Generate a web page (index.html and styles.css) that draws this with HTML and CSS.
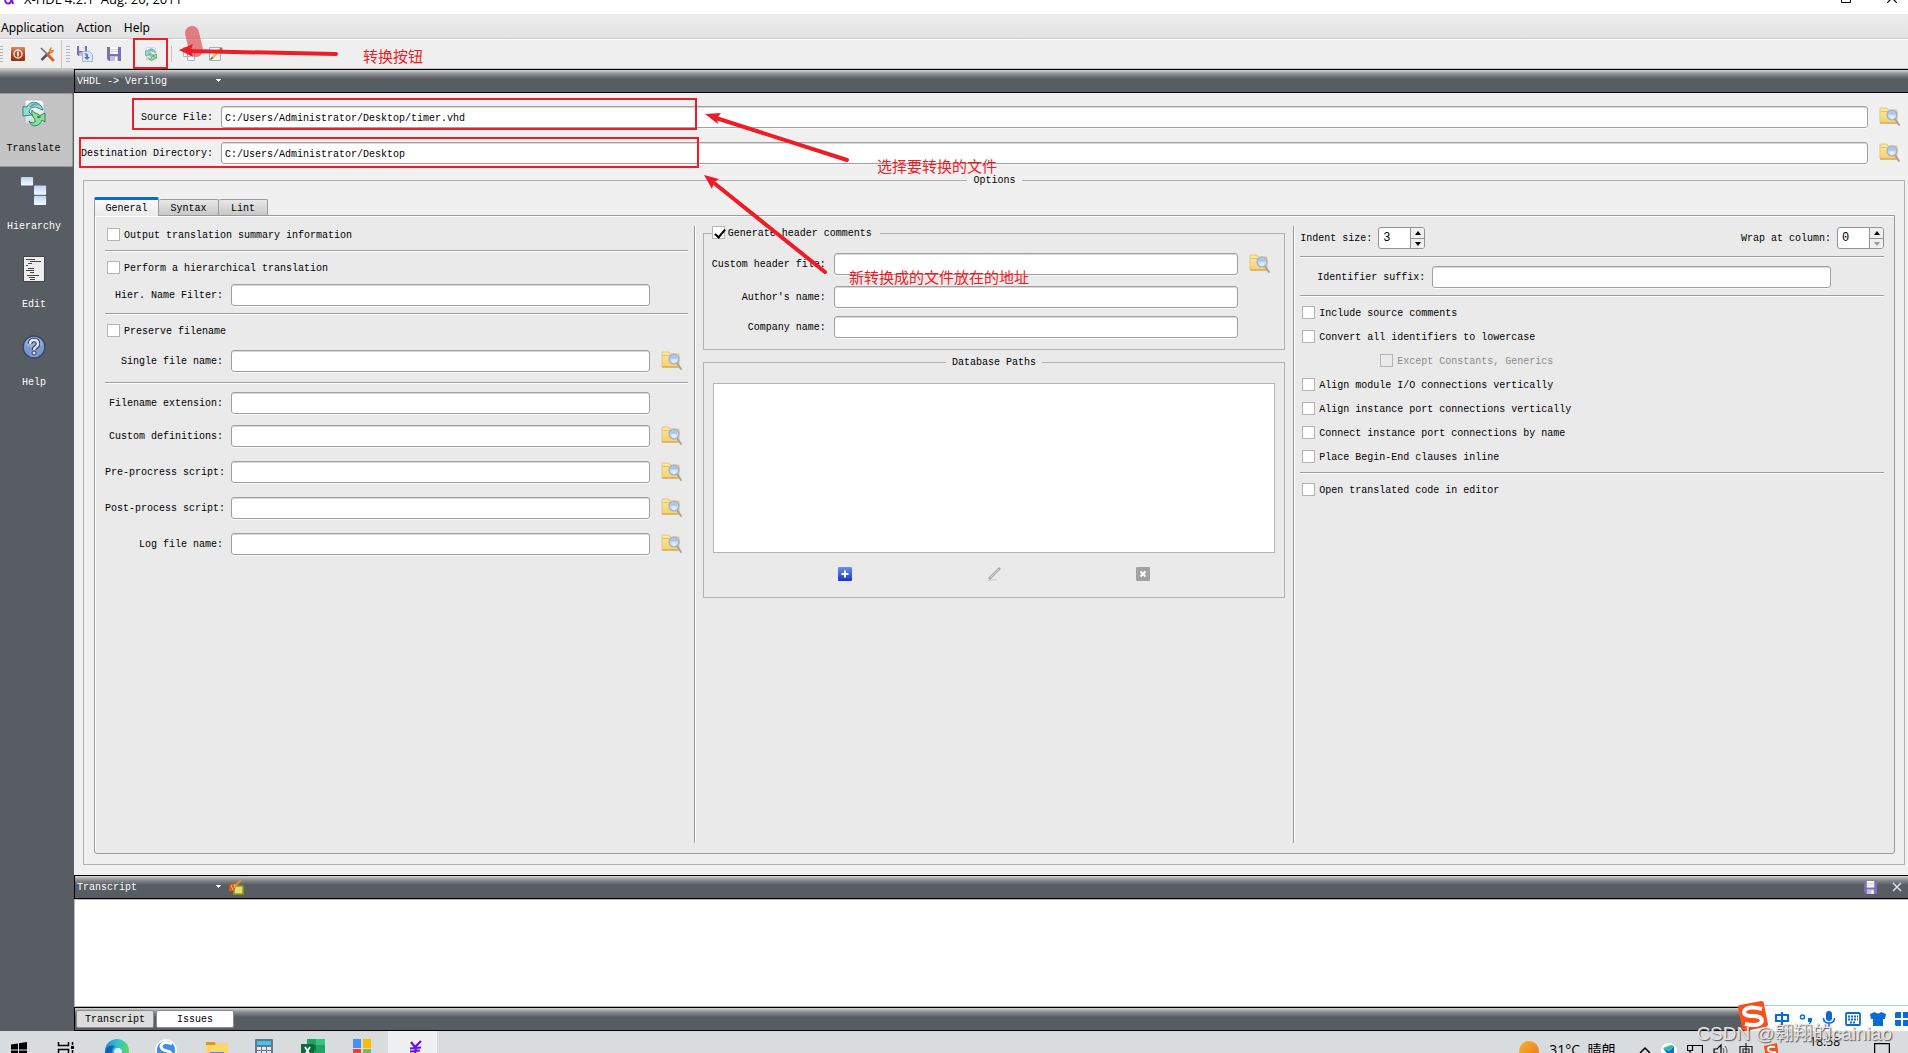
FILE: index.html
```html
<!DOCTYPE html>
<html lang="en">
<head>
<meta charset="utf-8">
<title>X-HDL 4.2.1</title>
<link rel="stylesheet" href="styles.css">
</head>
<body>
<svg class="defs" aria-hidden="true">
  <defs>
    <linearGradient id="gFolder" x1="0" y1="0" x2="0" y2="1"><stop offset="0" stop-color="#fbe9a6"/><stop offset="1" stop-color="#f3d26e"/></linearGradient>
    <radialGradient id="gLens" cx=".5" cy=".7" r=".6"><stop offset="0" stop-color="#eaf4ff"/><stop offset="1" stop-color="#a9c5f0"/></radialGradient>
    <linearGradient id="gPage" x1="0" y1="0" x2="0" y2="1"><stop offset="0" stop-color="#ffffff"/><stop offset="1" stop-color="#cfd9e6"/></linearGradient>
    <linearGradient id="gBox" x1="0" y1="0" x2="0" y2="1"><stop offset="0" stop-color="#b9d4f3"/><stop offset="1" stop-color="#f6faff"/></linearGradient>
    <linearGradient id="gPower" x1="0" y1="0" x2="0" y2="1"><stop offset="0" stop-color="#d98a68"/><stop offset=".5" stop-color="#b34a1c"/><stop offset="1" stop-color="#94300c"/></linearGradient>
    <linearGradient id="gPlus" x1="0" y1="0" x2="0" y2="1"><stop offset="0" stop-color="#6c94ea"/><stop offset="1" stop-color="#1834c8"/></linearGradient>
    <linearGradient id="gSun" x1="0" y1="0" x2="1" y2="1"><stop offset="0" stop-color="#f5b52c"/><stop offset="1" stop-color="#f0701c"/></linearGradient>
    <linearGradient id="gEdge" x1="0" y1="0" x2="1" y2="0"><stop offset="0" stop-color="#1b8fd8"/><stop offset=".5" stop-color="#2bbfd6"/><stop offset="1" stop-color="#5fd95a"/></linearGradient>
  </defs>
  <symbol id="browse" viewBox="0 0 22 20">
    <path d="M1 2q0-1 1-1h6l1 2h9v13H1z" fill="url(#gFolder)" stroke="#e4c67c"/>
    <path d="M1 16h17" stroke="#dfa04a" stroke-width="1.200"/>
    <path d="M2 4.500h7" stroke="#e2c070"/>
    <path d="M16 12l4 6" stroke="#a4a4a4" stroke-width="2" stroke-linecap="round"/>
    <circle cx="13" cy="8" r="5" fill="url(#gLens)" stroke="#a3adbd" stroke-width="1.200"/>
    <path d="M9.500 7a4 3.500 0 0 1 7 0q-3.500 1.500-7 0z" fill="#8fb2ec" opacity=".6"/>
  </symbol>
  <symbol id="translate" viewBox="0 0 24 28">
    <path d="M3 1h16l3 3v21H3z" fill="url(#gPage)" stroke="#b4bcc8"/>
    <path d="M21 11C19 3 9 0 5 8L1 7.500V17l9-1-3-3c1-5 6-6 9-4z" fill="#8fe0c8" stroke="#3f7d92"/>
    <path d="M8 8q5-5 10-2" fill="none" stroke="#5b9fc4" stroke-width="1.500"/>
    <path d="M10 11c3 5 9 3 8 8l-3-1 8-4v9l-3-2C18 28 9 29 7 22c3 3 7 2 6-1-1-3-4-4-3-10z" fill="#8ede98" stroke="#2f8750"/>
  </symbol>
  <symbol id="floppy" viewBox="0 0 14 14">
    <path d="M0 0h14v14H2l-2-2z" fill="#7c6fb4"/>
    <path d="M3 0h8v7H3z" fill="#fff"/><path d="M3 2.500h8M3 4.500h8" stroke="#d0d0dc"/>
    <path d="M3 9h8v5H3z" fill="#c3bedc"/><path d="M8 10h2v4H8z" fill="#fff"/>
  </symbol>
</svg>

<header class="titlebar">
  <svg class="app-logo" width="12" height="16" viewBox="0 0 12 16"><path d="M1 10q1 5 5 3l5-10M1 5q6 0 8 9" fill="none" stroke="#7a1ce0" stroke-width="2"/></svg>
  <span class="window-title">X-HDL 4.2.1&nbsp; Aug. 20, 2011</span>
  <span class="window-controls">
    <svg width="10" height="10" viewBox="0 0 10 10"><path d="M.5.5h9v9h-9z" fill="none" stroke="#000"/></svg>
    <svg width="10" height="10" viewBox="0 0 10 10"><path d="M0 0l10 10M10 0L0 10" stroke="#000" stroke-width="1.200"/></svg>
  </span>
</header>

<nav class="menubar">
  <button>Application</button><button>Action</button><button>Help</button>
</nav>

<div class="toolbar">
  <i class="grip"></i>
  <button aria-label="Exit"><svg width="16" height="16" viewBox="0 0 16 16"><rect x="1" y="1" width="14" height="14" rx="1" fill="url(#gPower)"/><circle cx="8" cy="8" r="4" fill="none" stroke="#f3dccf" stroke-width="1.500"/><path d="M8 5.500v5" stroke="#fff" stroke-width="1.500"/></svg></button>
  <button aria-label="Preferences"><svg width="16" height="16" viewBox="0 0 16 16"><path d="M2 2l8 8" stroke="#666" stroke-width="1.500"/><path d="M10 10l4 4" stroke="#d5651c" stroke-width="3" stroke-linecap="round"/><path d="M7 10L12 5" stroke="#d0662a" stroke-width="2.500"/><path d="M10 5.500q0-4 3-4.500l-1 3 3 0q0 3-4 3.500" fill="#e28a3a"/><path d="M2.500 14l5-5" stroke="#555" stroke-width="2.500"/></svg></button>
  <i class="divider full"></i>
  <i class="grip"></i>
  <button aria-label="Save as"><svg width="16" height="16" viewBox="0 0 16 16"><use href="#floppy" x="0" y="0" width="10" height="10"/><path d="M5.500 5.500h7l3 3v7h-10z" fill="#dfe8f6" stroke="#a9b4ca"/><path d="M7 7q5 0 4 4h2l-3 3-3-3h2q0-3-2-4z" fill="#4c78c4"/></svg></button>
  <button aria-label="Save"><svg width="14" height="14"><use href="#floppy"/></svg></button>
  <button class="run" aria-label="Translate"><svg width="12" height="14"><use href="#translate"/></svg></button>
  <i class="divider"></i>
  <button class="copy" aria-label="Copy"><svg width="14" height="16" viewBox="0 0 14 16"><path d="M1.500 1.500h7v9h-7zM5.500 5.500h7v9h-7z" fill="#f3f6fb" stroke="#a9b5cc"/></svg></button>
  <button class="compose" aria-label="Edit"><svg width="16" height="16" viewBox="0 0 16 16"><path d="M1.500 1.500h11v13h-11z" fill="#f2f5fa" stroke="#a4adbd"/><path d="M4 12L12 4" stroke="#e5c04c" stroke-width="2.500"/><path d="M12 4l2-2" stroke="#c4604c" stroke-width="2.500"/><path d="M2.500 13.500l2-2" stroke="#555" stroke-width="1.500"/></svg></button>
</div>

<div class="workspace">
  <nav class="sidebar">
    <button class="side-item selected"><svg width="24" height="28"><use href="#translate"/></svg>Translate</button>
    <button class="side-item"><svg width="28" height="30" viewBox="0 0 28 30"><path d="M7 9v17h8M7 14h8" fill="none" stroke="#55597f" stroke-width="1.500"/><rect x="0" y="0" width="13" height="9" rx="1" fill="url(#gBox)"/><rect x="14" y="9" width="13" height="10" rx="1" fill="url(#gBox)"/><rect x="14" y="20" width="13" height="10" rx="1" fill="url(#gBox)"/></svg>Hierarchy</button>
    <button class="side-item"><svg width="22" height="28" viewBox="0 0 22 28"><path d="M.5 1.500h21v25H.5z" fill="#eee" stroke="#444"/><path d="M3 4.500h9M7 6.500h11M5 8.500h4M3 10.500h2M5 13.500h6M3 15.500h8M7 17.500h4M4 20.500h12M6 22.500h6M7 24.500h5" stroke="#444"/></svg>Edit</button>
    <button class="side-item"><svg width="24" height="28" viewBox="0 0 24 28"><circle cx="12" cy="14" r="11" fill="#7f98cc" stroke="#34496f" stroke-width="1.500"/><path d="M3 12a9 8 0 0 1 18 0q-9 5-18 0z" fill="#a9bde3" opacity=".6"/><path d="M8 11q0-4 4-4t4 4q0 2-2 3t-2 3" fill="none" stroke="#2c3f66" stroke-width="4.500"/><path d="M8 11q0-4 4-4t4 4q0 2-2 3t-2 3" fill="none" stroke="#e6e6e6" stroke-width="2.500"/><circle cx="12" cy="20" r="2" fill="#e6e6e6" stroke="#2c3f66"/></svg>Help</button>
  </nav>

  <div class="content">
    <div class="dockbar">
      <select aria-label="Translation direction"><option>VHDL -&gt; Verilog</option></select>
    </div>

    <main class="main">
      <div class="path-row">
        <label for="src">Source File:</label>
        <input id="src" type="text" value="C:/Users/Administrator/Desktop/timer.vhd">
        <button class="browse" aria-label="Browse"><svg width="22" height="20"><use href="#browse"/></svg></button>
      </div>
      <div class="path-row">
        <label for="dst">Destination Directory:</label>
        <input id="dst" type="text" value="C:/Users/Administrator/Desktop">
        <button class="browse" aria-label="Browse"><svg width="22" height="20"><use href="#browse"/></svg></button>
      </div>

      <fieldset class="group options">
        <legend>Options</legend>
        <div class="tabs" role="tablist">
          <button class="tab active" role="tab">General</button><button class="tab" role="tab">Syntax</button><button class="tab" role="tab">Lint</button>
        </div>
        <div class="pane">
          <section class="col left">
            <label class="check"><input type="checkbox">Output translation summary information</label>
            <hr>
            <label class="check"><input type="checkbox">Perform a hierarchical translation</label>
            <div class="field short"><label for="f1">Hier. Name Filter:</label><input id="f1" type="text"></div>
            <hr>
            <label class="check"><input type="checkbox">Preserve filename</label>
            <div class="field"><label for="f2">Single file name:</label><input id="f2" type="text"><button class="browse" aria-label="Browse"><svg width="22" height="20"><use href="#browse"/></svg></button></div>
            <hr>
            <div class="field short"><label for="f3">Filename extension:</label><input id="f3" type="text"></div>
            <div class="field"><label for="f4">Custom definitions:</label><input id="f4" type="text"><button class="browse" aria-label="Browse"><svg width="22" height="20"><use href="#browse"/></svg></button></div>
            <div class="field"><label for="f5">Pre-procress script:</label><input id="f5" type="text"><button class="browse" aria-label="Browse"><svg width="22" height="20"><use href="#browse"/></svg></button></div>
            <div class="field"><label for="f6">Post-process script:</label><input id="f6" type="text"><button class="browse" aria-label="Browse"><svg width="22" height="20"><use href="#browse"/></svg></button></div>
            <div class="field"><label for="f7">Log file name:</label><input id="f7" type="text"><button class="browse" aria-label="Browse"><svg width="22" height="20"><use href="#browse"/></svg></button></div>
          </section>

          <section class="col middle">
            <fieldset class="group header-group">
              <legend><label class="check"><input type="checkbox" checked>Generate header comments</label></legend>
              <div class="field"><label for="h1">Custom header file:</label><input id="h1" type="text"><button class="browse" aria-label="Browse"><svg width="22" height="20"><use href="#browse"/></svg></button></div>
              <div class="field short"><label for="h2">Author's name:</label><input id="h2" type="text"></div>
              <div class="field short"><label for="h3">Company name:</label><input id="h3" type="text"></div>
            </fieldset>
            <fieldset class="group paths-group">
              <legend>Database Paths</legend>
              <div class="path-list"></div>
              <div class="list-actions">
                <button aria-label="Add"><svg width="14" height="14" viewBox="0 0 14 14"><rect width="14" height="14" rx="1" fill="url(#gPlus)"/><path d="M7 3.500v7M3.500 7h7" stroke="#fff" stroke-width="2"/></svg></button>
                <button aria-label="Edit path"><svg width="14" height="14" viewBox="0 0 14 14"><path d="M2 12L13 1" stroke="#a5a5a5" stroke-width="2.500"/><path d="M3 11L12 2" stroke="#ddd"/><path d="M1 13.500l9-1" stroke="#c4c4c4"/></svg></button>
                <button aria-label="Remove"><svg width="14" height="14" viewBox="0 0 14 14"><rect width="14" height="14" rx="1" fill="#a2a2a2"/><path d="M4.500 4.500l5 5M9.500 4.500l-5 5" stroke="#fff" stroke-width="2"/></svg></button>
              </div>
            </fieldset>
          </section>

          <section class="col right">
            <div class="spin-row">
              <label for="indent">Indent size:</label>
              <span class="spin"><input id="indent" type="number" value="3"><span class="steps"><button class="up" aria-label="Increase"></button><button class="down" aria-label="Decrease"></button></span></span>
              <label class="push" for="wrap">Wrap at column:</label>
              <span class="spin"><input id="wrap" type="number" value="0"><span class="steps"><button class="up" aria-label="Increase"></button><button class="down" aria-label="Decrease" disabled></button></span></span>
            </div>
            <hr>
            <div class="suffix-row"><label for="suffix">Identifier suffix:</label><input id="suffix" type="text"></div>
            <hr>
            <label class="check"><input type="checkbox">Include source comments</label>
            <label class="check"><input type="checkbox">Convert all identifiers to lowercase</label>
            <label class="check nested"><input type="checkbox" disabled>Except Constants, Generics</label>
            <label class="check"><input type="checkbox">Align module I/O connections vertically</label>
            <label class="check"><input type="checkbox">Align instance port connections vertically</label>
            <label class="check"><input type="checkbox">Connect instance port connections by name</label>
            <label class="check"><input type="checkbox">Place Begin-End clauses inline</label>
            <hr>
            <label class="check"><input type="checkbox">Open translated code in editor</label>
          </section>
        </div>
      </fieldset>
    </main>

    <section class="dock">
      <div class="dockbar">
        <select aria-label="Dock view"><option>Transcript</option></select>
        <button aria-label="Clear"><svg width="16" height="16" viewBox="0 0 16 16"><rect x="6" y="7" width="9" height="8" fill="#e8dc7a" stroke="#8f9c10" stroke-width="1.500"/><path d="M7 7l6-6" stroke="#e8902c" stroke-width="2"/><path d="M1 12q-1-6 3-8l4 4q-2 5-7 4z" fill="#e8501c"/><path d="M3 6l2 5M6 5l1 4" stroke="#ffd63c"/></svg></button>
        <span class="dock-tools">
          <button aria-label="Save transcript"><svg width="13" height="13"><use href="#floppy"/></svg></button>
          <button aria-label="Close"><svg width="10" height="10" viewBox="0 0 10 10"><path d="M1 1l8 8M9 1L1 9" stroke="#e0e0e0" stroke-width="1.500"/></svg></button>
        </span>
      </div>
      <div class="transcript"></div>
      <div class="dockbar dock-tabs">
        <button class="dock-tab">Transcript</button><button class="dock-tab current">Issues</button>
      </div>
    </section>
  </div>
</div>

<footer class="taskbar">
  <button class="task start" aria-label="Start"><svg width="16" height="16" viewBox="0 0 16 16"><path d="M0 2.500l7-1v6H0zM8 1.300L16 0v7.500H8zM0 8.500h7v6l-7-1zM8 8.500h8V16l-8-1.300z"/></svg></button>
  <button class="task view" aria-label="Task view"><svg width="18" height="16" viewBox="0 0 18 16"><path d="M1.500 0v3.500h10V0M1.500 16V7.500h10V16M15.500 0v3M15.500 8v8" fill="none" stroke="#000" stroke-width="1.500"/><path d="M14 4h3v3h-3z"/></svg></button>
  <button class="task tall" aria-label="Edge"><svg width="24" height="24" viewBox="0 0 24 24"><circle cx="12" cy="12" r="12" fill="url(#gEdge)"/><path d="M0 12q3-7 10-5-5 4-2 12l2 5Q0 22 0 12z" fill="#1262b4"/><circle cx="13" cy="13" r="4" fill="#dfeef4"/></svg></button>
  <button class="task tall" aria-label="Browser"><svg width="22" height="22" viewBox="0 0 22 22"><circle cx="11" cy="11" r="10" fill="#3f8fe8" stroke="#fff" stroke-width="1.500"/><path d="M17 5Q8 1 6 7q0 4 6 5t3 6q-4 2-10-1" fill="none" stroke="#fff" stroke-width="3"/></svg></button>
  <button class="task" aria-label="Files"><svg width="22" height="20" viewBox="0 0 22 20"><path d="M0 0h9l1 3H0z" fill="#d79a1a"/><path d="M0 3h9l2-2h11v18H0z" fill="#ffd667"/><path d="M4 10h14v8H4z" fill="#3d93dc"/></svg></button>
  <button class="task tall" aria-label="Calculator"><svg width="18" height="24" viewBox="0 0 18 24"><rect width="18" height="24" rx="1" fill="#6b7782"/><path d="M2 2h14v4H2z" fill="#35c8f2"/><path d="M2 8h4v3H2zM7 8h4v3H7zM12 8h4v3h-4zM2 12h4v3H2zM7 12h4v3H7zM12 12h4v3h-4z" fill="#e3e9ee"/></svg></button>
  <button class="task tall" aria-label="Excel"><svg width="24" height="22" viewBox="0 0 24 22"><path d="M6 0h18v22H6z" fill="#21a366"/><path d="M15 0h9v6h-9z" fill="#33c481"/><path d="M6 6h9v6H6z" fill="#107c41"/><path d="M0 5h13v14H0z" fill="#0e6b38"/><path d="M4 8l5 8M9 8l-5 8" stroke="#fff" stroke-width="1.800"/></svg></button>
  <button class="task tall" aria-label="Store"><svg width="18" height="20" viewBox="0 0 18 20"><path d="M0 0h8v9H0z" fill="#4c8df6"/><path d="M10 0h8v9h-8z" fill="#fbbc05"/><path d="M0 10h8v9H0z" fill="#ea4335"/><path d="M10 10h8v9h-8z" fill="#7fba4a"/></svg></button>
  <button class="task tall running" aria-label="X-HDL"><svg width="14" height="18" viewBox="0 0 14 18"><path d="M2 3l4 5 6-6M7 8l-1 8M1 9.500l11-1M1 12.500l10-1" fill="none" stroke="#6a10f0" stroke-width="2.200"/></svg></button>
  <div class="tray">
    <svg class="sun" width="20" height="20" viewBox="0 0 20 20"><circle cx="10" cy="10" r="10" fill="url(#gSun)"/></svg>
    <span class="weather">31°C&nbsp; 晴朗</span>
    <span class="tray-icons">
      <svg width="12" height="16" viewBox="0 0 12 16"><path d="M1 10l5-5 5 5" fill="none" stroke="#000" stroke-width="1.500"/></svg>
      <svg width="16" height="16" viewBox="0 0 16 16"><circle cx="8" cy="8" r="8" fill="#fff"/><path d="M2 5l6 3 5-5v7l-5 3z" fill="#1566e0"/><path d="M2 5l6 3 5-5-3-1z" fill="#18c79a"/></svg>
      <svg width="16" height="16" viewBox="0 0 16 16"><path d="M5 2.500h10.500v9H5M.5 2.500h5v5h-5zM3 7v9" fill="none" stroke="#000" stroke-width="1.200"/></svg>
      <svg width="16" height="16" viewBox="0 0 16 16"><path d="M1 6h3l4-4v12l-4-4H1z" fill="none" stroke="#000" stroke-width="1.200"/><path d="M10 5q2 3 0 6M12 3q4 5 0 10" fill="none" stroke="#555"/></svg>
      <svg width="14" height="16" viewBox="0 0 14 16"><path d="M1 3.500h12v9H1zM4 6h6v4H4zM7 0v16" fill="none" stroke="#222" stroke-width="1.200"/></svg>
      <svg width="16" height="16" viewBox="0 0 16 16"><path d="M1 3l13-3 2 16H3z" fill="#f4511e"/><path d="M12 4Q5 3 5 6t5 3 1 5" fill="none" stroke="#fff" stroke-width="2"/></svg>
    </span>
    <time class="clock">18:58</time>
    <svg class="notify" width="16" height="16" viewBox="0 0 16 16"><path d="M.5.500h15v13h-15z" fill="none" stroke="#000" stroke-width="1.500"/></svg>
  </div>
</footer>

<div class="ime">
  <svg class="ime-logo" width="32" height="32" viewBox="0 0 32 32"><path d="M1 6Q1 4 3 4l21-4q3 0 3 3l4 20q0 3-3 3L9 30q-4 0-4-3z" fill="#f4511e"/><path d="M25 8Q9 4 7 11q0 4 9 4t9 5q-2 6-17 3" fill="none" stroke="#fff" stroke-width="4"/></svg>
  <svg width="16" height="16" viewBox="0 0 16 16"><path d="M2 4h12v6H2zM8 1v14" fill="none" stroke="#0a6ad8" stroke-width="2.200"/></svg>
  <svg width="14" height="14" viewBox="0 0 14 14"><circle cx="3.500" cy="5" r="2" fill="none" stroke="#0a6ad8" stroke-width="1.500"/><path d="M9 6h4q1 5-4 7l2-3H9z" fill="#0a6ad8"/></svg>
  <svg width="14" height="16" viewBox="0 0 14 16"><rect x="4" y="0" width="6" height="10" rx="3" fill="#0a6ad8"/><path d="M1.500 7q0 5 5.500 5t5.500-5M7 12v4" fill="none" stroke="#0a6ad8" stroke-width="1.500"/></svg>
  <svg width="16" height="14" viewBox="0 0 16 14"><rect x="1" y="1" width="14" height="12" rx="1" fill="none" stroke="#0a6ad8" stroke-width="1.800"/><path d="M3 4.500h10M3 7.500h10M5 10.500h6" stroke="#0a6ad8" stroke-width="1.800" stroke-dasharray="2 1"/></svg>
  <svg width="16" height="14" viewBox="0 0 16 14"><path d="M0 2l5-2q3 3 6 0l5 2-1 5h-2v7H3V7H1z" fill="#0a6ad8"/></svg>
  <svg width="14" height="14" viewBox="0 0 14 14"><path d="M1 0h5v6H0V1zM8 0h6v6H8zM0 8h6v6H1l-1-1zM8 8h6v6H8z" fill="#0a6ad8"/></svg>
</div>

<div class="notes">
  <svg class="marks" width="1100" height="300" viewBox="0 0 1100 300">
    <path d="M192 33l4 17" stroke="#dc3c46" stroke-opacity=".62" stroke-width="14" stroke-linecap="round"/>
    <g fill="none" stroke="#ee1c25" stroke-width="2"><path d="M134 39h33v29h-33zM133 99h563v30H133zM80 138h618v29H80z"/></g>
    <g stroke="#ee1c25" stroke-width="4" stroke-linecap="round"><path d="M188 51l148 3M716 118l131 42M714 183l111 89"/></g>
    <path d="M179 50l14-6-2 6 2 7zM705 114l16-1-4 5 1 6zM704 175l15 4-5 3-2 7z" fill="#ee1c25"/>
  </svg>
  <span class="note run-note">转换按钮</span>
  <span class="note source-note">选择要转换的文件</span>
  <span class="note dest-note">新转换成的文件放在的地址</span>
</div>
<div class="watermark">CSDN @翱翔的cainiao</div>
</body>
</html>
```
FILE: styles.css
```css
* { box-sizing: border-box; }

body {
  margin: 0;
  height: 100vh;
  display: flex;
  flex-direction: column;
  position: relative;
  overflow: hidden;
  background: #f0f0f0;
  color: #000;
  font: 10px/14px "Liberation Mono", "Noto Sans CJK SC", monospace;
}

button, input, select { font: inherit; color: inherit; margin: 0; }
button { padding: 0; border: 0; background: none; display: flex; align-items: center; justify-content: center; }
svg { display: block; flex: none; }
.defs { position: absolute; width: 0; height: 0; }

/* Window frame */
.titlebar {
  height: 14px;
  flex: none;
  display: flex;
  align-items: flex-end;
  gap: 8px;
  padding: 0 11px 0 4px;
  overflow: hidden;
  background: #fff;
  font: 13px/18px "Open Sans", sans-serif;
}
.app-logo { margin-bottom: 8px; }
.window-title { margin-bottom: 6px; }
.window-controls { display: flex; gap: 36px; margin: 0 0 11px auto; }

.menubar {
  height: 26px;
  flex: none;
  display: flex;
  align-items: center;
  gap: 12px;
  padding: 2px 1px 0;
  background: linear-gradient(#ededed, #e2e2e2);
  border-bottom: 1px solid #fff;
  box-shadow: inset 0 -1px #ccc;
  font: 12px/18px "Noto Sans", sans-serif;
}

.toolbar {
  height: 29px;
  flex: none;
  display: flex;
  align-items: center;
  background: #efefef;
  border-bottom: 1px solid #c4c4c4;
}
.toolbar button { width: 29px; height: 28px; }
.toolbar .run { width: 36px; margin-left: 5px; }
.toolbar .compose { width: 26px; }
.grip { width: 4px; height: 16px; background: repeating-linear-gradient(#b4b4b4 0 1px, transparent 1px 3px); }
.grip:first-child { width: 3px; }
.divider { width: 1px; height: 16px; margin: 0 2px; background: #c8c8c8; }
.divider.full { height: 100%; margin: 0 4px 0 0; }

/* Shell */
.workspace { flex: 1; min-height: 0; display: flex; }
.sidebar {
  width: 74px;
  flex: none;
  display: flex;
  flex-direction: column;
  gap: 4px;
  padding-top: 24px;
  background: linear-gradient(#c9c9c9, #8a8c90 4px, #585c63 9px);
  color: #fff;
}
.side-item { height: 74px; flex-direction: column; justify-content: flex-start; gap: 15px; padding: 6px 6px 0 0; }
.side-item svg { height: 28px; }
.side-item.selected {
  width: 73px;
  background: #c4c4c4;
  border: 1px solid #9b9b9b;
  border-left: 0;
  border-radius: 0 2px 2px 0;
  padding: 5px 5px 0 0;
  color: #000;
}

.content { flex: 1; min-width: 0; display: flex; flex-direction: column; }
.dockbar {
  height: 24px;
  flex: none;
  display: flex;
  align-items: center;
  padding: 0 2px;
  border: 1px solid #000;
  border-right: 0;
  background: linear-gradient(#d4d4d4, #8a8c90 4px, #585c63 9px);
  color: #fff;
}
.dockbar select {
  appearance: none;
  width: 146px;
  height: 20px;
  padding: 2px 0 0;
  border: 0;
  background: linear-gradient(#fff, #fff) 139px 8px / 5px 1px no-repeat,
    linear-gradient(#fff, #fff) 140px 9px / 3px 1px no-repeat,
    linear-gradient(#fff, #fff) 141px 10px / 1px 1px no-repeat;
}
.dockbar > button { margin-left: 5px; }
.dockbar .dock-tools { display: flex; gap: 15px; margin-left: auto; padding-right: 4px; }

.main { flex: 1; min-height: 0; display: flex; flex-direction: column; padding: 6px 0 10px; }
.path-row {
  height: 36px;
  flex: none;
  display: grid;
  grid-template-columns: 134px 1fr 30px;
  gap: 8px;
  align-items: center;
  padding: 0 2px 0 5px;
}
.path-row label, .field label, .spin-row label, .suffix-row label { padding-top: 2px; text-align: right; white-space: nowrap; }

input[type="text"] {
  width: 100%;
  min-width: 0;
  height: 22px;
  padding: 2px 3px 0;
  border: 1px solid #a0a0a0;
  border-radius: 3px;
  background: #fff;
  box-shadow: inset 0 1px #d8d8d8, 0 1px #f8f8f8;
}
.browse { width: 30px; height: 30px; padding-right: 2px; }

.group {
  margin: 0;
  min-width: 0;
  padding: 0 8px;
  border: 1px solid #b0b0b0;
}
.group > legend { height: 14px; padding: 0 6px; margin: 0 auto; line-height: 16px; }

.options {
  flex: 1;
  min-height: 0;
  display: flex;
  flex-direction: column;
  margin: 2px 3px 0 9px;
  padding: 10px 9px 10px 10px;
}
.tabs { height: 18px; flex: none; display: flex; align-items: flex-end; }
.tab {
  width: 60px;
  height: 16px;
  padding-top: 2px;
  border: 1px solid #9a9a9a;
  border-width: 1px 1px 0 0;
  border-radius: 2px 2px 0 0;
  background: linear-gradient(#e8e8e8, #c8c8c8);
}
.tab:last-child { width: 49px; }
.tab.active {
  width: 65px;
  height: 19px;
  margin-bottom: -1px;
  border-width: 3px 1px 0;
  border-top-color: #0a6cc8;
  background: linear-gradient(#fafafa, #eaeaea);
  z-index: 1;
}
.pane {
  flex: 1;
  min-height: 0;
  display: grid;
  grid-template-columns: 1fr 1fr 1fr;
  padding: 10px 0;
  border: 1px solid #9a9a9a;
  border-radius: 0 0 3px 3px;
  background: #eaeaea;
  box-shadow: inset 1px 1px #fff;
}
.col { min-width: 0; display: flex; flex-direction: column; gap: 6px; }
.left, .middle { border-right: 1px solid #9a9a9a; box-shadow: 1px 0 #fff; }
.left { padding: 0 6px 0 10px; }
.middle { padding: 0 8px; gap: 5px; }
.right { padding: 0 10px 0 6px; }

hr { width: 100%; height: 2px; flex: none; margin: 0 0 1px; border: 0; border-top: 1px solid #9c9c9c; background: #fff; }

.check { height: 18px; display: flex; align-items: center; gap: 4px; padding: 2px 0 0 2px; white-space: nowrap; }
.check input {
  appearance: none;
  position: relative;
  width: 13px;
  height: 13px;
  margin-bottom: 3px;
  border: 1px solid #b4b4b4;
  background: #fff;
}
.check input:checked::after {
  content: "";
  position: absolute;
  left: 4px;
  top: 0;
  width: 4px;
  height: 9px;
  border: solid #000;
  border-width: 0 2px 2px 0;
  transform: rotate(40deg);
}
.check.nested { padding-left: 80px; color: #8c8c8c; }
.check.nested input { background: #eaeaea; }

.field {
  height: 30px;
  flex: none;
  display: grid;
  grid-template-columns: 118px 1fr 30px;
  column-gap: 8px;
  align-items: center;
}
.field.short { height: 24px; }

.header-group { display: flex; flex-direction: column; gap: 6px; padding: 9px 8px 10px; }
.header-group > legend { margin: 0; padding: 0 8px 0 0; }
.header-group > legend .check { height: 14px; padding-left: 0; gap: 3px; line-height: 14px; }
.header-group .field { grid-template-columns: 114px 1fr 30px; }
.paths-group { padding: 14px 9px 8px; }
.path-list { height: 170px; border: 1px solid #b4b4b4; background: #fff; }
.list-actions { height: 30px; margin-top: 6px; display: grid; grid-template-columns: 149px 149px 149px; justify-content: center; }

.spin-row { height: 24px; display: flex; align-items: center; gap: 6px; }
.spin-row .push { margin-left: auto; }
.spin {
  width: 47px;
  height: 22px;
  display: flex;
  overflow: hidden;
  border: 1px solid #929292;
  border-radius: 3px;
  background: #fff;
  font-size: 12px;
}
.spin input { width: 31px; flex: none; padding: 0 4px; border: 0; background: none; appearance: textfield; }
.spin input::-webkit-inner-spin-button { appearance: none; }
.steps { flex: 1; display: grid; grid-template-rows: 1fr 1fr; border-left: 1px solid #929292; background: #f0f0f0; }
.steps .down { border-top: 1px solid #929292; }
.steps button::after { content: ""; border: 3px solid transparent; }
.steps .up::after { border-bottom: 4px solid #000; border-top: 0; }
.steps .down::after { border-top: 4px solid #000; border-bottom: 0; }
.steps .down:disabled::after { border-top-color: #999; }

.suffix-row { height: 24px; display: grid; grid-template-columns: 125px 1fr; gap: 7px; align-items: center; padding-right: 53px; }

/* Transcript dock */
.transcript { height: 108px; border: 1px solid #b8b8b8; border-width: 1px 0 1px 1px; background: #fff; }
.dock-tabs { gap: 2px; padding: 0 1px; }
.dockbar > .dock-tab {
  width: 78px;
  height: 18px;
  margin: 0;
  padding-top: 2px;
  border: 1px solid #8c8c8c;
  border-radius: 2px;
  background: #dcdcdc;
  color: #000;
}
.dockbar > .dock-tab.current { background: #fff; }

/* Desktop taskbar, partly below the screen edge */
.taskbar {
  height: 22px;
  flex: none;
  display: flex;
  align-items: flex-start;
  overflow: hidden;
  background: #d9dcde;
  font: 14px/18px "Open Sans", "Noto Sans CJK SC", sans-serif;
}
.task { width: 49px; height: 40px; flex: none; align-items: flex-start; padding-top: 11px; }
.task.start { width: 38px; }
.task.view { width: 56px; }
.task.tall { padding: 8px 3px 0 0; }
.task.running { padding: 8px 0 0 6px; background: #eef0f2; }
.tray { display: flex; align-items: flex-start; margin-left: auto; padding-right: 18px; }
.sun { margin: 10px 10px 0 0; }
.weather { margin: 10px 24px 0 0; white-space: nowrap; }
.tray-icons { display: flex; gap: 10px; margin-top: 12px; }
.clock { margin: 2px 34px 0 30px; font-size: 12px; }
.notify { margin-top: 12px; }

/* Floating input-method bar */
.ime {
  position: absolute;
  right: 0;
  bottom: 22px;
  width: 158px;
  height: 26px;
  display: flex;
  align-items: center;
  gap: 9px;
  background: #fff;
  border-top: 1px solid #b8c8e0;
}
.ime-logo { margin: 0 -4px 4px -13px; }

/* Callouts drawn over the window */
.notes { position: absolute; inset: 0; overflow: hidden; pointer-events: none; }
.marks { position: absolute; left: 0; top: 0; }
.note { position: absolute; color: #ee1c25; font: 15px/20px "Noto Sans CJK SC", sans-serif; white-space: nowrap; }
.run-note { left: 363px; top: 46px; }
.source-note { left: 877px; top: 156px; }
.dest-note { left: 849px; top: 267px; }

.watermark {
  position: absolute;
  right: 16px;
  bottom: 5px;
  color: #e4e4e4;
  font: 19px/28px "Liberation Sans", "Noto Sans CJK SC", sans-serif;
  text-shadow: 1px 1px 1px #555;
  white-space: nowrap;
}
```
